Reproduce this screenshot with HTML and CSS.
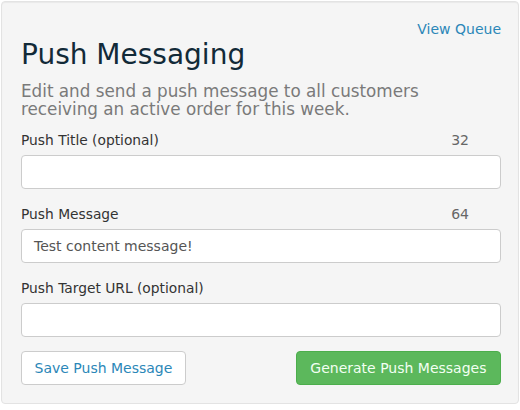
FILE: index.html
```html
<!DOCTYPE html>
<html>
<head>
<meta charset="utf-8">
<link rel="stylesheet" href="styles.css">
</head>
<body>
<div class="well">
  <div class="top-row"><a class="link" href="#">View Queue</a></div>
  <h1 class="title">Push Messaging</h1>
  <p class="desc">Edit and send a push message to all customers receiving an active order for this week.</p>
  <div class="field">
    <div class="field-head"><label class="label">Push Title (optional)</label><span class="count">32</span></div>
    <div class="input"></div>
  </div>
  <div class="field">
    <div class="field-head"><label class="label">Push Message</label><span class="count">64</span></div>
    <div class="input">Test content message!</div>
  </div>
  <div class="field">
    <div class="field-head"><label class="label">Push Target URL (optional)</label></div>
    <div class="input"></div>
  </div>
  <div class="actions">
    <button class="btn btn-default">Save Push Message</button>
    <button class="btn btn-success">Generate Push Messages</button>
  </div>
</div>
</body>
</html>
```
FILE: styles.css
```css
html, body {
  margin: 0;
  padding: 0;
  background: #ffffff;
}
body {
  font-family: "DejaVu Sans", sans-serif;
  padding: 1px;
}
.well {
  box-sizing: border-box;
  width: 518px;
  height: 403px;
  background: #f5f5f5;
  border: 1px solid #e3e3e3;
  border-radius: 4px;
  box-shadow: inset 0 1px 1px rgba(0,0,0,0.05);
  padding: 19px 17px 17px 19px;
  display: flex;
  flex-direction: column;
}
.top-row {
  display: flex;
  justify-content: flex-end;
  height: 20px;
}
.link {
  font-size: 14px;
  color: #2b87b8;
  text-decoration: none;
  line-height: 17px;
}
.title {
  margin: 0;
  font-size: 28px;
  font-weight: normal;
  color: #122a38;
  line-height: 28px;
}
.desc {
  margin: 13px 0 0;
  max-width: 430px;
  font-size: 16.8px;
  line-height: 18px;
  color: #7a7a7a;
}
.field {
  display: flex;
  flex-direction: column;
  margin-top: 15px;
}
.desc + .field {
  margin-top: 12px;
}
.field-head {
  display: flex;
  justify-content: space-between;
  padding-right: 32px;
  height: 20px;
  line-height: 20px;
}
.label {
  font-size: 13.8px;
  color: #333;
}
.count {
  font-size: 14px;
  color: #666;
}
.input {
  box-sizing: border-box;
  height: 34px;
  margin-top: 5px;
  background: #fff;
  border: 1px solid #ccc;
  border-radius: 4px;
  padding: 0 12px;
  font-size: 14px;
  line-height: 32px;
  color: #555;
}
.actions {
  display: flex;
  justify-content: space-between;
  margin-top: 14px;
}
.btn {
  box-sizing: border-box;
  height: 34px;
  border-radius: 4px;
  font-family: "DejaVu Sans", sans-serif;
  font-size: 14px;
}
.btn-default {
  padding: 0 12.5px;
  background: #fff;
  border: 1px solid #ccc;
  color: #2b87b8;
}
.btn-success {
  padding: 0 13.5px;
  background: #5cb85c;
  border: 1px solid #4cae4c;
  color: #f2fff2;
}
```
